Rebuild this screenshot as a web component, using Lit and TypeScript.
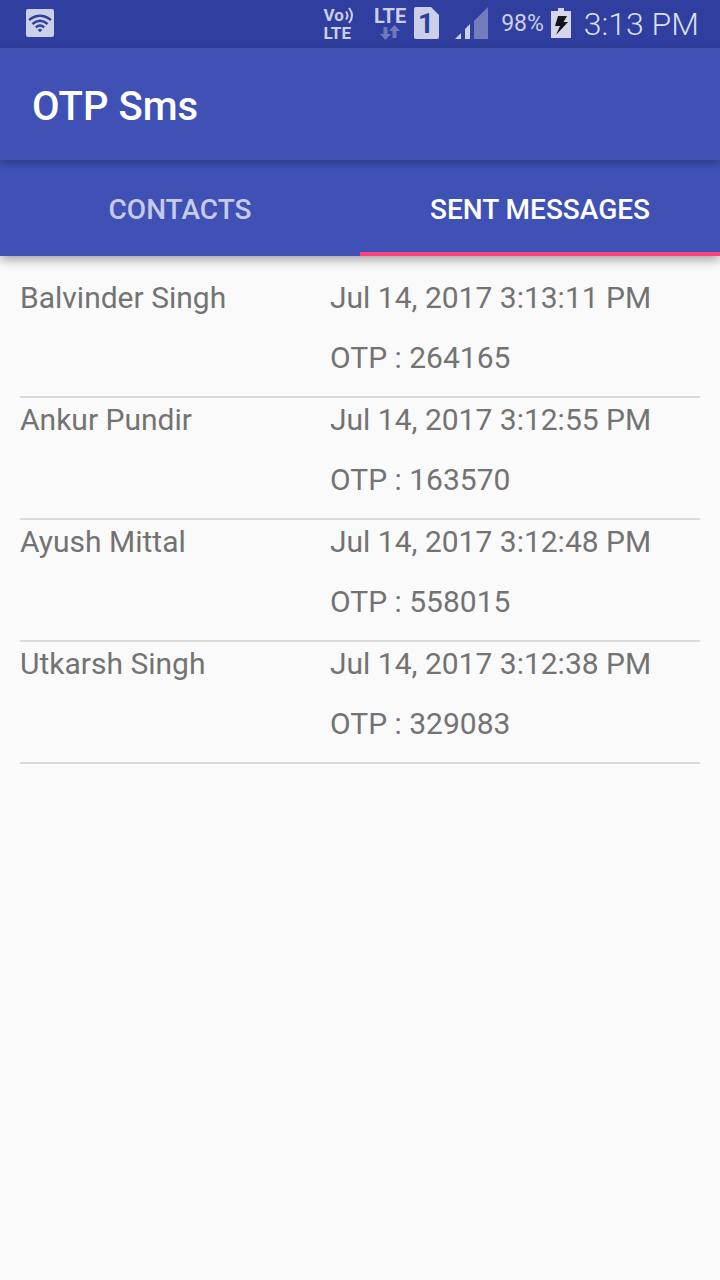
import { LitElement, html, css } from "lit";
import { customElement, property, state } from "lit/decorators.js";
import { classMap } from "lit/directives/class-map.js";

interface Message {
  name: string;
  date: string;
  otp: string;
}

const messages: Message[] = [
  { name: "Balvinder Singh", date: "Jul 14, 2017 3:13:11 PM", otp: "264165" },
  { name: "Ankur Pundir", date: "Jul 14, 2017 3:12:55 PM", otp: "163570" },
  { name: "Ayush Mittal", date: "Jul 14, 2017 3:12:48 PM", otp: "558015" },
  { name: "Utkarsh Singh", date: "Jul 14, 2017 3:12:38 PM", otp: "329083" },
];

@customElement("status-bar")
class StatusBar extends LitElement {
  static styles = css`
    :host {
      display: flex;
      align-items: center;
      justify-content: space-between;
      height: 48px;
      box-sizing: border-box;
      padding: 0 21px 2px 26px;
      background: #303f9f;
      color: #cbcfe7;
      white-space: nowrap;
    }
    svg {
      display: block;
      flex: none;
    }
    .right,
    .network,
    .power {
      display: flex;
      align-items: center;
    }
    .right {
      gap: 13px;
    }
    .network {
      gap: 8px;
    }
    .power {
      gap: 7px;
    }
    .volte {
      margin-right: 12px;
      padding-top: 2px;
      font: 700 17px/18px Roboto, sans-serif;
    }
    .voice {
      display: flex;
      align-items: center;
    }
    .data {
      display: flex;
      flex-direction: column;
      align-items: center;
      font: 700 20px/18px Roboto, sans-serif;
    }
    .signal {
      margin-left: 8px;
    }
    .battery {
      padding-top: 2px;
      font: 400 23px/32px Roboto, sans-serif;
    }
    .clock {
      padding-top: 2px;
      font: 300 32px/40px Roboto, sans-serif;
      color: #dcdff1;
    }
    .digit {
      font: 700 28px Roboto, sans-serif;
    }
  `;

  render() {
    return html`
      <svg width="28" height="28" viewBox="0 0 28 28" aria-hidden="true">
        <rect width="28" height="28" rx="2" fill="#cbcfe7" />
        <g fill="none" stroke="#303f9f" stroke-width="2.4">
          <path d="M3 11Q14 2.6 25 11" />
          <path d="M6.4 15Q14 8.4 21.6 15" />
          <path d="M9.8 18.4Q14 14.6 18.2 18.4" />
        </g>
        <path d="M11.8 20.8Q14 18.8 16.2 20.8L14 23.4Z" fill="#303f9f" />
      </svg>
      <div class="right">
        <div class="network">
          <div class="volte">
            <div class="voice">
              Vo
              <svg width="10" height="17" viewBox="0 0 10 17" aria-hidden="true">
                <g fill="none" stroke="#cbcfe7" stroke-width="2">
                  <path d="M2 4.5Q5 8.5 2 12.5" />
                  <path d="M5 1Q11 8.5 5 16" />
                </g>
              </svg>
            </div>
            <div>LTE</div>
          </div>
          <div class="data">
            LTE
            <svg width="20" height="15" viewBox="0 0 20 15" aria-hidden="true">
              <g fill="#7079bc">
                <path d="M3.5 2H7.5V9H11L5.5 15L0 9H3.5Z" />
                <path d="M12.5 13H16.5V6H20L14.5 0L9 6H12.5Z" />
              </g>
            </svg>
          </div>
          <svg width="25" height="32" viewBox="0 0 25 32" aria-label="SIM 1">
            <path d="M2 0H17L25 8V30Q25 32 23 32H2Q0 32 0 30V2Q0 0 2 0Z" fill="#cbcfe7" />
            <text class="digit" x="12" y="26" text-anchor="middle" fill="#303f9f">1</text>
          </svg>
          <svg class="signal" width="33" height="32" viewBox="0 0 33 32" aria-hidden="true">
            <path d="M0 32L6 26V32Z" fill="#cbcfe7" />
            <path d="M10 22L15 17V32H10Z" fill="#cbcfe7" />
            <path d="M19 14L33 0V32H19Z" fill="#737cbd" />
          </svg>
        </div>
        <div class="power">
          <span class="battery">98%</span>
          <svg width="20" height="30" viewBox="0 0 20 30" aria-hidden="true">
            <path d="M7 0H13V3H20V30H0V3H7Z" fill="#d3d6ec" />
            <path d="M7 8H16L12.5 14H17L5 27L9 18H4Z" fill="#151515" />
          </svg>
        </div>
        <span class="clock">3:13 PM</span>
      </div>
    `;
  }
}

@customElement("message-row")
class MessageRow extends LitElement {
  static styles = css`
    :host {
      display: grid;
      grid-template-columns: 31fr 37fr;
      padding-bottom: 16px;
      border-bottom: 2px solid #dadada;
      font: 400 30px/44px Roboto, sans-serif;
      color: #737373;
    }
    .details {
      display: grid;
      gap: 16px;
    }
  `;

  @property({ attribute: false }) message!: Message;

  render() {
    return html`
      <div>${this.message.name}</div>
      <div class="details">
        <div>${this.message.date}</div>
        <div>OTP : ${this.message.otp}</div>
      </div>
    `;
  }
}

@customElement("app-root")
class AppRoot extends LitElement {
  static styles = css`
    :host {
      display: flex;
      flex-direction: column;
      min-height: 100vh;
      background: #fafafa;
      font-family: Roboto, sans-serif;
    }
    .toolbar {
      display: flex;
      align-items: center;
      height: 112px;
      padding: 0 32px;
      background: #3f51b5;
      box-shadow: 0 3px 8px rgba(0, 0, 0, 0.3);
      z-index: 2;
    }
    h1 {
      margin: 0;
      padding-top: 6px;
      font: 500 40px/48px Roboto, sans-serif;
      color: #fff;
    }
    .tabs {
      display: grid;
      grid-template-columns: 1fr 1fr;
      height: 96px;
      background: #3f51b5;
      box-shadow: 0 4px 10px rgba(0, 0, 0, 0.35);
      z-index: 1;
    }
    .tab {
      margin: 0;
      padding: 8px 0 0;
      border: 0;
      border-bottom: 4px solid transparent;
      background: none;
      font: 500 28px/36px Roboto, sans-serif;
      color: #c5cae9;
      cursor: pointer;
    }
    .selected {
      border-bottom-color: #ff4081;
      color: #fff;
    }
    ul {
      margin: 0;
      padding: 20px 20px 0;
      list-style: none;
    }
  `;

  @state() selected = "SENT MESSAGES";

  render() {
    return html`
      <status-bar></status-bar>
      <header class="toolbar"><h1>OTP Sms</h1></header>
      <nav class="tabs" role="tablist">
        ${["CONTACTS", "SENT MESSAGES"].map(
          (label) => html`<button
            role="tab"
            aria-selected=${label === this.selected}
            class=${classMap({ tab: true, selected: label === this.selected })}
            @click=${() => (this.selected = label)}
          >${label}</button>`
        )}
      </nav>
      <ul>
        ${messages.map((m) => html`<li><message-row .message=${m}></message-row></li>`)}
      </ul>
    `;
  }
}
